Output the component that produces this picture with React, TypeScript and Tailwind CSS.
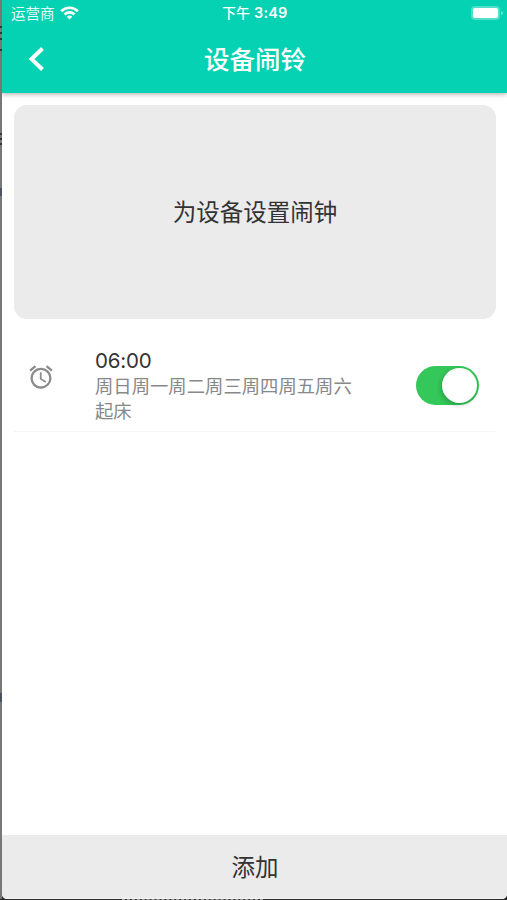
import React from "react";
import { MdAccessAlarm } from "react-icons/md";

const cjk = "font-['Inter','Noto_Sans_CJK_SC',sans-serif]";

function StatusBar() {
  return (
    <div className="flex h-[25px] items-center pl-[9px] text-white">
      <div className="flex w-[211px] items-center gap-[5px]">
        <span className="pt-px text-[14.5px] leading-[25px] font-normal opacity-90">运营商</span>
        <svg width="19" height="14" viewBox="0 0 19 14" fill="none" stroke="white" strokeWidth="2.7">
          <path d="M1.2 5.2C5.8.6 13.2.6 17.8 5.2" />
          <path d="M4.5 8.5c2.8-2.8 7.2-2.8 10 0" />
          <path d="M6.7 10.7c1.6-1.5 4-1.5 5.6 0L9.5 13.5z" fill="white" stroke="none" />
        </svg>
      </div>
      <div className="flex gap-[4px] text-[14.5px] leading-[25px] font-semibold whitespace-nowrap">
        <span className="text-[14px] font-medium">下午</span>
        <span className="tracking-[0.2px]">3:49</span>
      </div>
      <div className="ml-auto flex items-center gap-px pr-[4px]">
        <span className="h-[14px] w-[29px] rounded-[4px] bg-white/30 p-[2px]">
          <span className="block h-full w-full rounded-[2px] bg-white" />
        </span>
        <span className="h-[4px] w-[2px] rounded-r bg-white/40" />
      </div>
    </div>
  );
}

function Header() {
  return (
    <header className="relative h-[93px] shrink-0 bg-[#04d2b3] shadow-[0_1px_5px_rgba(0,0,0,0.35)]">
      <StatusBar />
      <div className="grid h-[68px] grid-cols-[60px_1fr_59px] items-center">
        <button className="pl-[26px]" aria-label="返回">
          <svg width="16" height="26" viewBox="0 0 16 26" fill="none" stroke="white" strokeWidth="4">
            <path d="M14.5 1.5 3.5 12 14.5 22.5" />
          </svg>
        </button>
        <h1 className="pt-px text-center text-[25.5px] leading-[68px] font-medium text-white">设备闹铃</h1>
      </div>
    </header>
  );
}

function AlarmRow() {
  return (
    <div className="mx-[12px] mt-[12px] flex h-[101px] border-b border-[#f5f5f5]">
      <div className="w-[81px] shrink-0 pt-[32px] pl-[13px]">
        <MdAccessAlarm size={28} className="text-[#8b8b8b]" />
      </div>
      <div className="flex-1 pt-[16.5px]">
        <div className="font-['Inter'] text-[20.5px] leading-[26px] tracking-[-0.2px] text-[#333]">06:00</div>
        <div className="text-[18.35px] leading-[25.5px] text-[#888]">周日周一周二周三周四周五周六</div>
        <div className="text-[18.35px] leading-[25.5px] text-[#888]">起床</div>
      </div>
      <div className="pt-[35px] pr-[16px]">
        <div className="flex h-[39px] w-[63px] items-center justify-end rounded-full bg-[#34c759] pr-[2px]">
          <span className="size-[35px] rounded-full bg-white shadow-[-1px_2px_5px_rgba(0,0,0,0.22)]" />
        </div>
      </div>
    </div>
  );
}

export default function App() {
  return (
    <div className={`h-[900px] w-[507px] overflow-hidden bg-[#292929] ${cjk}`}>
      <div className="flex h-[899px]">
        <div className="flex w-[2px] shrink-0 flex-col bg-[#77777a]">
          <span className="mt-[26px] h-[2px] bg-[#333]" />
          <span className="mt-[4px] h-[2px] bg-[#333]" />
          <span className="mt-[4px] h-[2px] bg-[#333]" />
          <span className="mt-[9px] h-[2px] bg-[#333]" />
          <span className="mt-[82px] h-[2px] bg-[#333]" />
          <span className="mt-[3px] h-[2px] bg-[#333]" />
          <span className="mt-[3px] h-[2px] bg-[#333]" />
          <span className="mt-[43px] h-[8px] bg-[#4b535e]" />
          <span className="mt-[497px] h-[9px] bg-[#4b535e]" />
        </div>
        <main className="flex min-w-0 flex-1 flex-col overflow-hidden rounded-b-[5px] bg-white">
          <Header />
          <section className="mt-[12px] mr-[11px] ml-[12px] flex h-[214px] shrink-0 items-center justify-center rounded-[13px] bg-[#ebebeb] pt-[2px] text-[23.5px] text-[#333]">
            为设备设置闹钟
          </section>
          <AlarmRow />
          <button className="mt-auto h-[64px] border-b border-[#f5f5f5] bg-[#ebebeb] pt-[2px] pl-px text-[23.5px] text-[#333]">添加</button>
        </main>
      </div>
      <div className="ml-[122px] h-px w-[141px] border-t border-dashed border-[#a0a0a0]" />
    </div>
  );
}
